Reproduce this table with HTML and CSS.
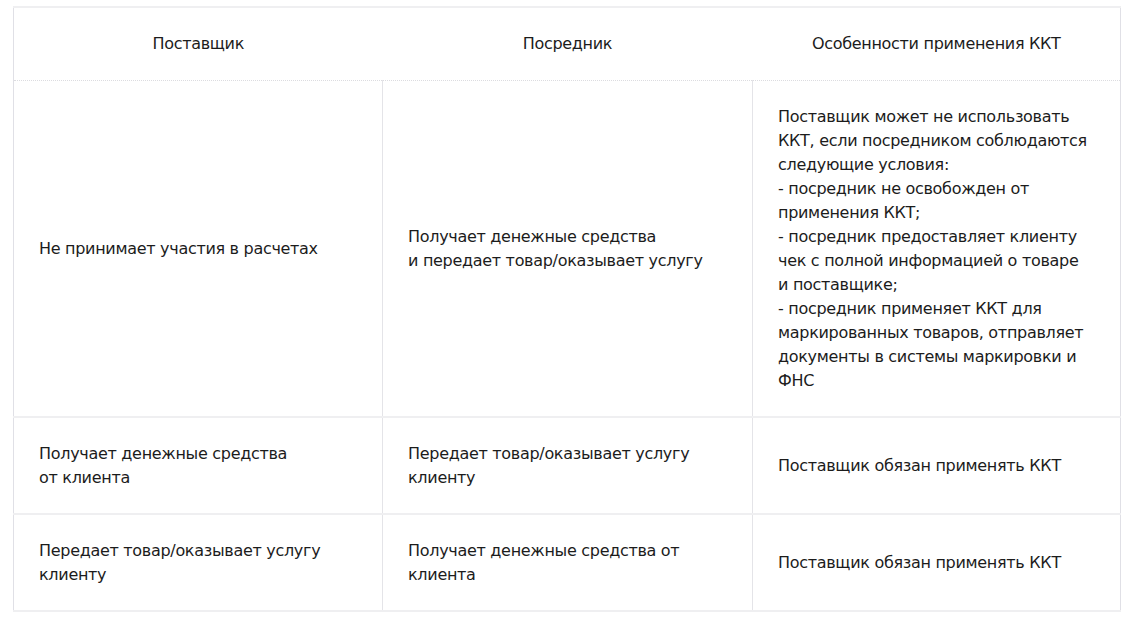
FILE: index.html
```html
<!DOCTYPE html>
<html lang="ru">
<head>
<meta charset="utf-8">
<title>ККТ</title>
<link rel="stylesheet" href="styles.css">
</head>
<body>
<table class="kkt">
  <colgroup>
    <col class="c1"><col class="c2"><col class="c3">
  </colgroup>
  <thead>
    <tr>
      <th>Поставщик</th>
      <th>Посредник</th>
      <th>Особенности применения ККТ</th>
    </tr>
  </thead>
  <tbody>
    <tr class="tall">
      <td>Не принимает участия в расчетах</td>
      <td>Получает денежные средства<br>и передает товар/оказывает услугу</td>
      <td>Поставщик может не использовать ККТ, если посредником соблюдаются следующие условия:<br>- посредник не освобожден от применения ККТ;<br>- посредник предоставляет клиенту чек с полной информацией о товаре и поставщике;<br>- посредник применяет ККТ для маркированных товаров, отправляет документы в системы маркировки и ФНС</td>
    </tr>
    <tr>
      <td>Получает денежные средства<br>от клиента</td>
      <td>Передает товар/оказывает услугу клиенту</td>
      <td>Поставщик обязан применять ККТ</td>
    </tr>
    <tr>
      <td>Передает товар/оказывает услугу клиенту</td>
      <td>Получает денежные средства от клиента</td>
      <td>Поставщик обязан применять ККТ</td>
    </tr>
  </tbody>
</table>
</body>
</html>
```

FILE: styles.css
```css
html, body {
  background: #ffffff;
}
body {
  margin: 6px 10px 0 13px;
  font-family: "DejaVu Sans", Tahoma, sans-serif;
  font-size: 16px;
  letter-spacing: -0.3px;
  color: #1c1c1c;
}
.kkt {
  width: 1108px;
  border-collapse: collapse;
  table-layout: fixed;
  border-top: 2px solid #efeff1;
  border-left: 1px solid #e0e0e6;
  border-right: 1px solid #e0e0e6;
  border-bottom: 2px solid #efeff1;
}
.c1 { width: 369px; }
.c2 { width: 370px; }
.kkt th {
  height: 72px;
  padding: 0 10px;
  font-weight: normal;
  text-align: center;
  vertical-align: middle;
  line-height: 24px;
  border-bottom: 1px dotted #dcdce0;
}
.kkt th:first-child,
.kkt td:first-child {
  border-left: 1px solid #e0e0e6;
}
.kkt th:last-child,
.kkt td:last-child {
  border-right: 1px solid #e0e0e6;
}
.kkt td {
  padding: 24px 30px 23px 25px;
  line-height: 24px;
  vertical-align: middle;
  text-align: left;
  border-top: 2px solid #efeff1;
  border-left: 1px solid #e4e4e8;
}
.kkt tbody tr:first-child td {
  border-top: none;
}
```
